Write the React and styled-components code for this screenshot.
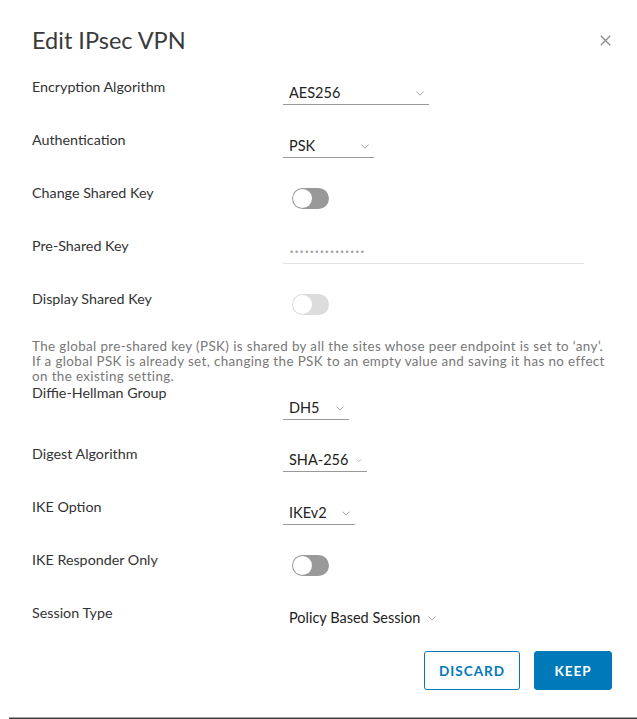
import React from "react";
import styled, { createGlobalStyle } from "styled-components";

const Global = createGlobalStyle`
  html, body { margin: 0; padding: 0; background: #fff; }
  body { font-family: Lato, "Open Sans", sans-serif; -webkit-font-smoothing: antialiased; }
  * { box-sizing: border-box; }
`;

const Modal = styled.div`
  width: 637px;
  height: 719px;
  display: flex;
  flex-direction: column;
  background: #fff;
`;

const Header = styled.div`
  display: flex;
  align-items: center;
  justify-content: space-between;
  padding: 26px 26px 0 32px;
  height: 54px;
`;

const Title = styled.h3`
  margin: 0;
  font-family: Lato, sans-serif;
  font-weight: 400;
  font-size: 23.5px;
  line-height: 28px;
  color: #3a3a3a;
`;

const Close = styled.button`
  border: 0;
  background: none;
  padding: 0;
  width: 11px;
  height: 11px;
  display: flex;
  cursor: pointer;
`;

const Form = styled.div`
  display: flex;
  flex-direction: column;
  padding: 24px 0 0 32px;
`;

const Row = styled.div`
  display: grid;
  grid-template-columns: 251px auto;
  align-items: start;
  height: ${(p) => p.$h || 53}px;
`;

const Label = styled.div`
  font-size: 14.3px;
  line-height: 18px;
  color: #333;
`;

const Select = styled.div`
  margin-top: ${(p) => p.$top ?? 6}px;
  width: ${(p) => (p.$w ? `${p.$w}px` : "auto")};
  display: ${(p) => (p.$plain ? "inline-flex" : "flex")};
  justify-self: start;
  align-items: center;
  justify-content: ${(p) => (p.$plain ? "flex-start" : "space-between")};
  gap: 8px;
  padding: 0 5px 2px 6px;
  border-bottom: 1px solid ${(p) => (p.$plain ? "transparent" : "#9a9a9a")};
  font-size: 14.5px;
  line-height: 18px;
  color: #222;
  white-space: nowrap;
`;

const Chevron = () => (
  <svg width="8" height="5" viewBox="0 0 8 5" fill="none">
    <path d="M0.5 0.6 L4 4.2 L7.5 0.6" stroke="#a3a3a3" strokeWidth="1" />
  </svg>
);

const Toggle = styled.div`
  margin-top: 4px;
  margin-left: 9px;
  width: 37px;
  height: 21px;
  border-radius: 11px;
  background: ${(p) => (p.$disabled ? "#dcdcdc" : "#999")};
  position: relative;
  &::after {
    content: "";
    position: absolute;
    left: 1px;
    top: 1px;
    width: 19px;
    height: 19px;
    border-radius: 50%;
    background: #fff;
  }
`;

const Input = styled.div`
  margin-top: 6px;
  width: 301px;
  padding: 0 0 2px 7px;
  border-bottom: 1px solid #e2e2e2;
  height: 21px;
  display: flex;
  align-items: center;
`;

const Dots = styled.span`
  font-family: "Liberation Sans", sans-serif;
  font-size: 9px;
  letter-spacing: 1.9px;
  color: #a0a0a0;
  line-height: 18px;
`;

const Help = styled.p`
  margin: 0;
  font-size: 13.4px;
  letter-spacing: 0.38px;
  line-height: 15px;
  color: #777;
  white-space: nowrap;
`;

const Footer = styled.div`
  display: flex;
  justify-content: flex-end;
  gap: 14px;
  padding-right: 25px;
`;

const Button = styled.button`
  height: 39px;
  min-width: 78px;
  padding: 0 14px;
  border-radius: 3px;
  border: 1px solid #0079b8;
  background: ${(p) => (p.$primary ? "#0079b8" : "#fff")};
  color: ${(p) => (p.$primary ? "#fff" : "#0079b8")};
  font-family: Lato, sans-serif;
  font-weight: 700;
  font-size: 13.5px;
  letter-spacing: 1px;
  cursor: pointer;
`;

const BottomEdge = styled.div`
  margin-top: auto;
  margin-left: 9px;
  height: 2px;
  border-top: 1px solid #a8a8a8;
  background: #3a3a3a;
`;

function SelectField({ value, w, top, plain }) {
  return (
    <Select $w={w} $top={top} $plain={plain}>
      <span>{value}</span>
      <Chevron />
    </Select>
  );
}

export default function App() {
  return (
    <>
      <Global />
      <Modal>
        <Header>
          <Title>Edit IPsec VPN</Title>
          <Close aria-label="Close">
            <svg width="11" height="11" viewBox="0 0 11 11">
              <path d="M0.8 0.8 L10.2 10.2 M10.2 0.8 L0.8 10.2" stroke="#8c8c8c" strokeWidth="1.3" />
            </svg>
          </Close>
        </Header>
        <Form>
          <Row>
            <Label>Encryption Algorithm</Label>
            <SelectField value="AES256" w={146} />
          </Row>
          <Row>
            <Label>Authentication</Label>
            <SelectField value="PSK" w={91} />
          </Row>
          <Row>
            <Label>Change Shared Key</Label>
            <Toggle />
          </Row>
          <Row>
            <Label>Pre-Shared Key</Label>
            <Input>
              <Dots>•••••••••••••••</Dots>
            </Input>
          </Row>
          <Row $h={49}>
            <Label>Display Shared Key</Label>
            <Toggle $disabled />
          </Row>
          <Help>
            The global pre-shared key (PSK) is shared by all the sites whose peer endpoint is set to ‘any’.
            <br />
            If a global PSK is already set, changing the PSK to an empty value and saving it has no effect
            <br />
            on the existing setting.
          </Help>
          <Row $h={61}>
            <Label>Diffie-Hellman Group</Label>
            <SelectField value="DH5" w={66} top={15} />
          </Row>
          <Row>
            <Label>Digest Algorithm</Label>
            <SelectField value="SHA-256" w={84} />
          </Row>
          <Row>
            <Label>IKE Option</Label>
            <SelectField value="IKEv2" w={72} />
          </Row>
          <Row>
            <Label>IKE Responder Only</Label>
            <Toggle />
          </Row>
          <Row $h={47}>
            <Label>Session Type</Label>
            <SelectField value="Policy Based Session" plain top={5} />
          </Row>
        </Form>
        <Footer>
          <Button>DISCARD</Button>
          <Button $primary>KEEP</Button>
        </Footer>
        <BottomEdge />
      </Modal>
    </>
  );
}
